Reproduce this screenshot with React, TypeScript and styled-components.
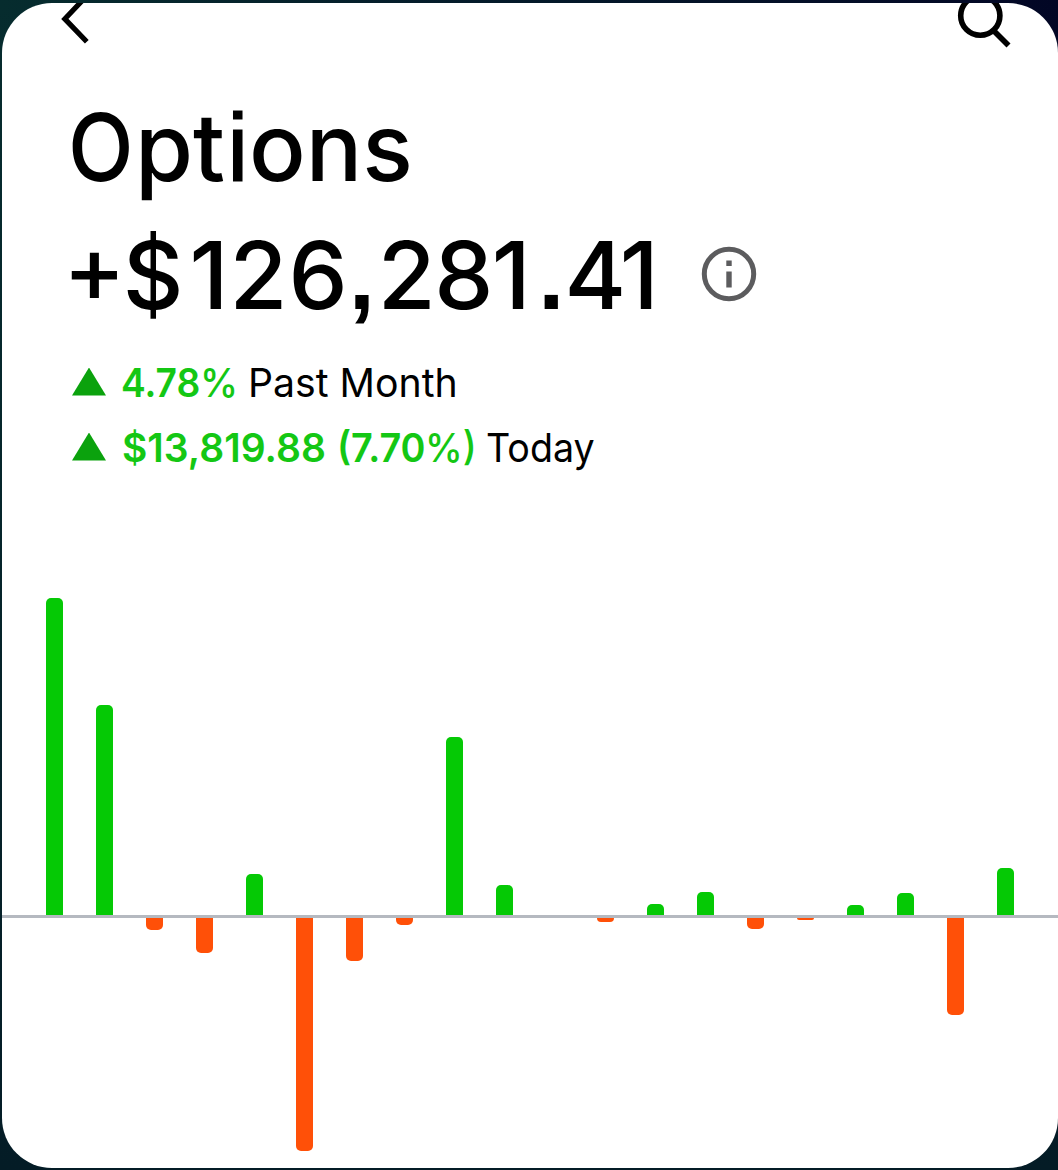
import React from "react";
import styled, { createGlobalStyle } from "styled-components";

const GlobalStyle = createGlobalStyle`
  *, *::before, *::after { box-sizing: border-box; }
  body { margin: 0; }
`;

const Backdrop = styled.div`
  width: 1058px;
  height: 1170px;
  padding: 3px 0 2px 2px;
  overflow: hidden;
  background:
    linear-gradient(to bottom, transparent 0%, #041c26 100%),
    linear-gradient(to right, #062c2e, #020625);
`;

const Card = styled.main`
  display: flex;
  flex-direction: column;
  height: 1165px;
  overflow: hidden;
  border-radius: 50px;
  background: #fff;
  color: #000;
  font-family: Inter, "Liberation Sans", sans-serif;
`;

const Toolbar = styled.header`
  display: flex;
  justify-content: space-between;
  flex: none;
  height: 80px;
  padding: 0 46px 0 56px;
`;

const IconButton = styled.button`
  display: block;
  height: 48px;
  padding: 0;
  border: 0;
  background: none;
  color: #000;
`;

const Icon = styled.svg`
  display: block;
  overflow: visible;
  fill: none;
  stroke: currentColor;
`;

const Summary = styled.section`
  display: flex;
  flex-direction: column;
  flex: none;
  height: 512px;
  padding-left: 66px;
`;

const Headline = styled.h1<{ $height: number }>`
  display: flex;
  align-items: baseline;
  height: ${(p) => p.$height}px;
  margin: 0;
  font-size: 94px;
  font-weight: 500;
  line-height: 128px;
  white-space: nowrap;
`;

const Amount = styled.span`
  display: flex;
  flex: none;
  align-items: baseline;
  width: 633px;
  font-feature-settings: "case" 1;
`;

const Run = styled.span<{ $width?: number; $scale?: number; $before?: number; $spacing?: number }>`
  flex: none;
  width: ${(p) => (p.$width ? `${p.$width}px` : "auto")};
  margin-left: ${(p) => p.$before ?? 0}px;
  letter-spacing: ${(p) => p.$spacing ?? 0}px;
  transform: scaleX(${(p) => p.$scale ?? 1});
  transform-origin: left center;
`;

const SquareMark = styled(Run)`
  font-family: "Liberation Sans", sans-serif;
  font-weight: 700;
`;

const SquareDotted = styled(Run)`
  font-family: "Liberation Sans", sans-serif;
  font-size: 97px;
  font-weight: 400;
  -webkit-text-stroke: 1px currentColor;
`;

const InfoIcon = styled(Icon)`
  flex: none;
  align-self: flex-start;
  margin-top: 35px;
  color: #5c5c5e;
`;

const Change = styled.div`
  display: flex;
  align-items: center;
  height: 65px;
  font-size: 40px;
  line-height: 61px;
  white-space: nowrap;
`;

const Triangle = styled.span`
  flex: none;
  width: 34px;
  height: 28px;
  margin: 0 15px 4px 4px;
  background: #0ba20d;
  clip-path: polygon(50% 0, 100% 100%, 0 100%);
`;

const Gain = styled(Run)`
  padding-bottom: 2px;
  color: #14c714;
  font-weight: 600;
`;

const Percent = styled(Gain)`
  font-weight: 500;
`;

const Period = styled(Run)`
  padding-bottom: 2px;
  font-weight: 400;
`;

const Chart = styled.section`
  display: grid;
  grid-template-rows: 320px 3px 250px;
  flex: none;
`;

const BarRow = styled.div<{ $align: string }>`
  display: flex;
  align-items: ${(p) => p.$align};
  gap: 33.06px;
  padding-left: 44px;
`;

const Baseline = styled.div`
  background: #b5b9c0;
`;

const Bar = styled.div<{ $up?: boolean }>`
  flex: none;
  width: 17px;
  border-radius: ${(p) => (p.$up ? "5px 5px 0 0" : "0 0 5px 5px")};
  background: ${(p) => (p.$up ? "#05c905" : "#ff5008")};
`;

const values = [
  317, 210, -12.4, -35, 41, -233, -43.4, -7, 178, 30,
  0, -4, 11.4, 23, -11.4, -1.7, 10, 22, -97.4, 47.5,
];

export default function App() {
  return (
    <Backdrop>
      <GlobalStyle />
      <Card>
        <Toolbar>
          <IconButton aria-label="Back">
            <Icon width="34" height="44" viewBox="0 0 34 44" strokeWidth="5.2">
              <path d="M28.8 -9.2L6.8 13.9L28.8 36.8" />
            </Icon>
          </IconButton>
          <IconButton aria-label="Search">
            <Icon width="56" height="48" viewBox="0 0 56 48" strokeWidth="5.6">
              <circle cx="24.3" cy="12.7" r="19.6" />
              <path d="M37.5 27.5L52.5 42.5" />
            </Icon>
          </IconButton>
        </Toolbar>
        <Summary>
          <Headline $height={128}>
            <Run $width={67} $scale={0.91}>O</Run>
            <Run $width={92}>pt</Run>
            <SquareDotted $width={22}>i</SquareDotted>
            <Run $width={180}>ons</Run>
          </Headline>
          <Headline $height={140}>
            <Amount>
              <Run $before={-5} $spacing={-3}>+$</Run>
              <Run $before={9} $spacing={1}>126</Run>
              <SquareMark>,</SquareMark>
              <Run $before={3} $spacing={-1.5}>281</Run>
              <SquareMark $before={9}>.</SquareMark>
              <Run $spacing={-4}>41</Run>
            </Amount>
            <InfoIcon width="56" height="56" viewBox="0 0 56 56" strokeWidth="5">
              <circle cx="28" cy="28" r="24.7" />
              <path d="M28 14.5V20M28 25.5V41.5" strokeWidth="5.4" />
            </InfoIcon>
          </Headline>
          <Change>
            <Triangle />
            <Gain $width={79} $scale={0.93}>4.78</Gain>
            <Percent $width={48} $scale={0.96}>%</Percent>
            <Period $width={230} $scale={0.98}>Past Month</Period>
          </Change>
          <Change>
            <Triangle />
            <Gain $width={215} $before={1} $scale={0.975}>$13,819.88</Gain>
            <Gain $width={88} $scale={0.945}>(7.70</Gain>
            <Percent $width={61} $scale={0.95}>%)</Percent>
            <Period $width={120} $scale={0.94}>Today</Period>
          </Change>
        </Summary>
        <Chart>
          <BarRow $align="flex-end">
            {values.map((v, i) => <Bar key={i} $up style={{ height: Math.max(v, 0) }} />)}
          </BarRow>
          <Baseline />
          <BarRow $align="flex-start">
            {values.map((v, i) => <Bar key={i} style={{ height: Math.max(-v, 0) }} />)}
          </BarRow>
        </Chart>
      </Card>
    </Backdrop>
  );
}
